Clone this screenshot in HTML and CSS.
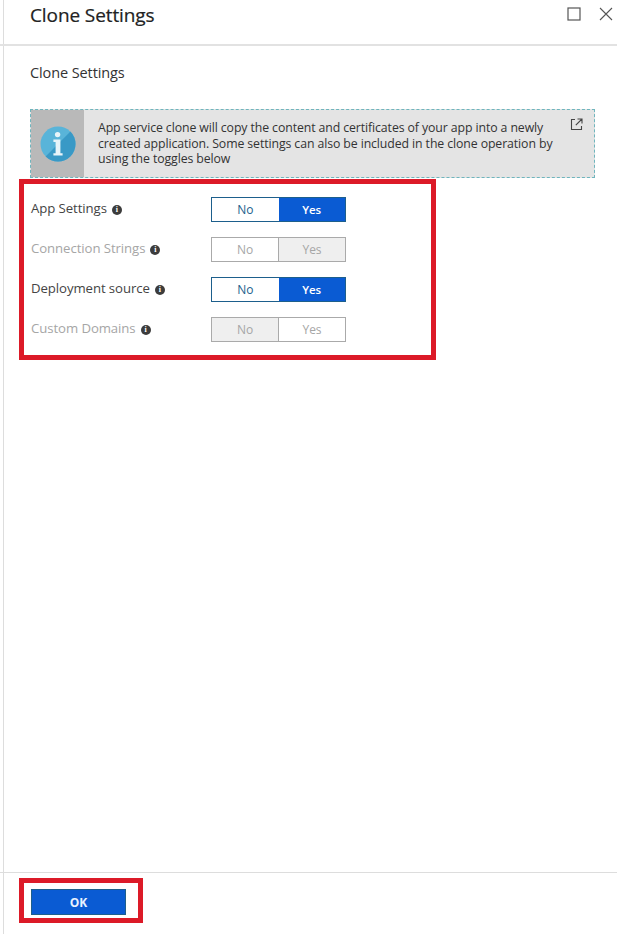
FILE: index.html
```html
<!DOCTYPE html>
<html lang="en">
<head>
<meta charset="utf-8">
<title>Clone Settings</title>
<link rel="stylesheet" href="styles.css">
</head>
<body>
<div class="panel">
  <header class="head">
    <h1 class="title">Clone Settings</h1>
    <div class="win">
      <svg width="14" height="14" viewBox="0 0 14 14"><rect x="1" y="1" width="12" height="12" fill="none" stroke="#555" stroke-width="1.2"/></svg>
      <svg width="14" height="14" viewBox="0 0 14 14"><path d="M1 1L13 13M13 1L1 13" fill="none" stroke="#555" stroke-width="1.1"/></svg>
    </div>
  </header>
  <main class="body">
    <h2 class="sub">Clone Settings</h2>
    <section class="info">
      <div class="strip">
        <svg width="36" height="36" viewBox="0 0 36 36">
          <circle cx="18" cy="18" r="17.5" fill="#59b4d9"/>
          <path d="M30.4 5.6A17.5 17.5 0 0 1 5.6 30.4Z" fill="#3999c6"/>
          <circle cx="17.6" cy="8.6" r="2.7" fill="#e8f4f9"/>
          <path d="M13.4 13.6h7v13.6h2.2v2.4h-9.2v-2.4h2.2v-11.2h-2.2z" fill="#e8f4f9"/>
        </svg>
      </div>
      <p class="msg">App service clone will copy the content and certificates of your app into a newly created application. Some settings can also be included in the clone operation by using the toggles below</p>
      <svg class="ext" width="13" height="13" viewBox="0 0 13 13"><path d="M5 1.5H1.5v10h10V8M7.5 1h4.5v4.5M12 1L5.8 7.2" fill="none" stroke="#444" stroke-width="1.1"/></svg>
    </section>
    <section class="mark rows">
      <div class="row">
        <span class="lab">App Settings</span><span class="dot">i</span>
        <div class="tog"><span class="opt">No</span><span class="opt on">Yes</span></div>
      </div>
      <div class="row off">
        <span class="lab">Connection Strings</span><span class="dot">i</span>
        <div class="tog"><span class="opt">No</span><span class="opt on">Yes</span></div>
      </div>
      <div class="row">
        <span class="lab">Deployment source</span><span class="dot">i</span>
        <div class="tog"><span class="opt">No</span><span class="opt on">Yes</span></div>
      </div>
      <div class="row off">
        <span class="lab">Custom Domains</span><span class="dot">i</span>
        <div class="tog"><span class="opt on">No</span><span class="opt">Yes</span></div>
      </div>
    </section>
  </main>
  <footer class="foot">
    <div class="mark okwrap"><button class="ok" type="button">OK</button></div>
  </footer>
</div>
</body>
</html>
```
FILE: styles.css
```css
* { box-sizing: border-box; }
html, body { margin: 0; padding: 0; background: #fff; }
body { font-family: "Open Sans", "Liberation Sans", sans-serif; color: #333; height: 934px; overflow: hidden; }
.panel { margin-left: 3px; border-left: 1px solid #ddd; height: 934px; display: flex; flex-direction: column; }
.head { height: 46px; flex: none; border-bottom: 2px solid #e2e2e2; display: flex; align-items: flex-start; justify-content: space-between; padding: 2px 4px 0 30px; margin-left: -4px; }
.title { margin: 0; font-size: 19px; line-height: 26px; font-weight: 400; color: #222; letter-spacing: -.1px; -webkit-text-stroke: .2px #222; }
.win { display: flex; gap: 18px; padding-top: 5px; }
.body { flex: 1; padding: 17px 22px 0 26px; }
.sub { margin: 0 0 27px; font-size: 14.5px; line-height: 19px; font-weight: 400; color: #333; letter-spacing: -.1px; }
.info { position: relative; height: 69px; display: flex; border: 1px dashed #6fb5bd; background: #e4e4e4; }
.strip { width: 53px; flex: none; background: #b9b9b9; display: flex; align-items: center; justify-content: center; padding-top: 1px; }
.msg { margin: 0; padding: 10px 30px 0 14px; font-size: 12.3px; line-height: 15.7px; color: #333; letter-spacing: -.1px; }
.ext { position: absolute; right: 11px; top: 8px; }
.mark { border: 5px solid #dc1a28; }
.rows { margin: 1px 0 0 -11px; width: 417px; height: 181px; padding: 13px 0 0 7px; display: flex; flex-direction: column; gap: 15px; }
.row { height: 25px; display: flex; align-items: center; font-size: 13.2px; letter-spacing: -.08px; color: #444; position: relative; }
.lab { margin-top: -4px; }
.dot { width: 10px; height: 10px; margin-left: 5px; border-radius: 50%; background: #3c3c3c; color: #fff; font: 700 8px/10px "Liberation Serif", serif; text-align: center; flex: none; }
.off .lab { color: #a6a6a6; }
.tog { position: absolute; left: 180px; top: 0; width: 135px; height: 25px; display: flex; border: 1px solid #1d5f8c; }
.opt { flex: 1; display: flex; align-items: center; justify-content: center; font-size: 12px; color: #1d5f8c; background: #fff; }
.opt.on { background: #0a5bd3; color: #fff; font-weight: 600; font-size: 11.5px; }
.off .tog { border-color: #aaa; }
.off .opt { color: #a6a6a6; background: #fff; border-right: 1px solid #aaa; }
.off .opt:last-child { border-right: 0; }
.off .opt.on { background: #efefef; font-weight: 400; font-size: 12px; color: #a6a6a6; }
.foot { flex: none; height: 62px; border-top: 1px solid #ddd; margin-left: -4px; padding: 5px 0 0 19px; }
.okwrap { width: 124px; height: 45px; padding: 6px 0 0 7px; }
.ok { display: block; width: 95px; height: 26px; padding: 0; border: 1px solid #1d5f8c; background: #0a5bd3; color: #e8f2ff; font: 700 12px "Open Sans", sans-serif; }
```
